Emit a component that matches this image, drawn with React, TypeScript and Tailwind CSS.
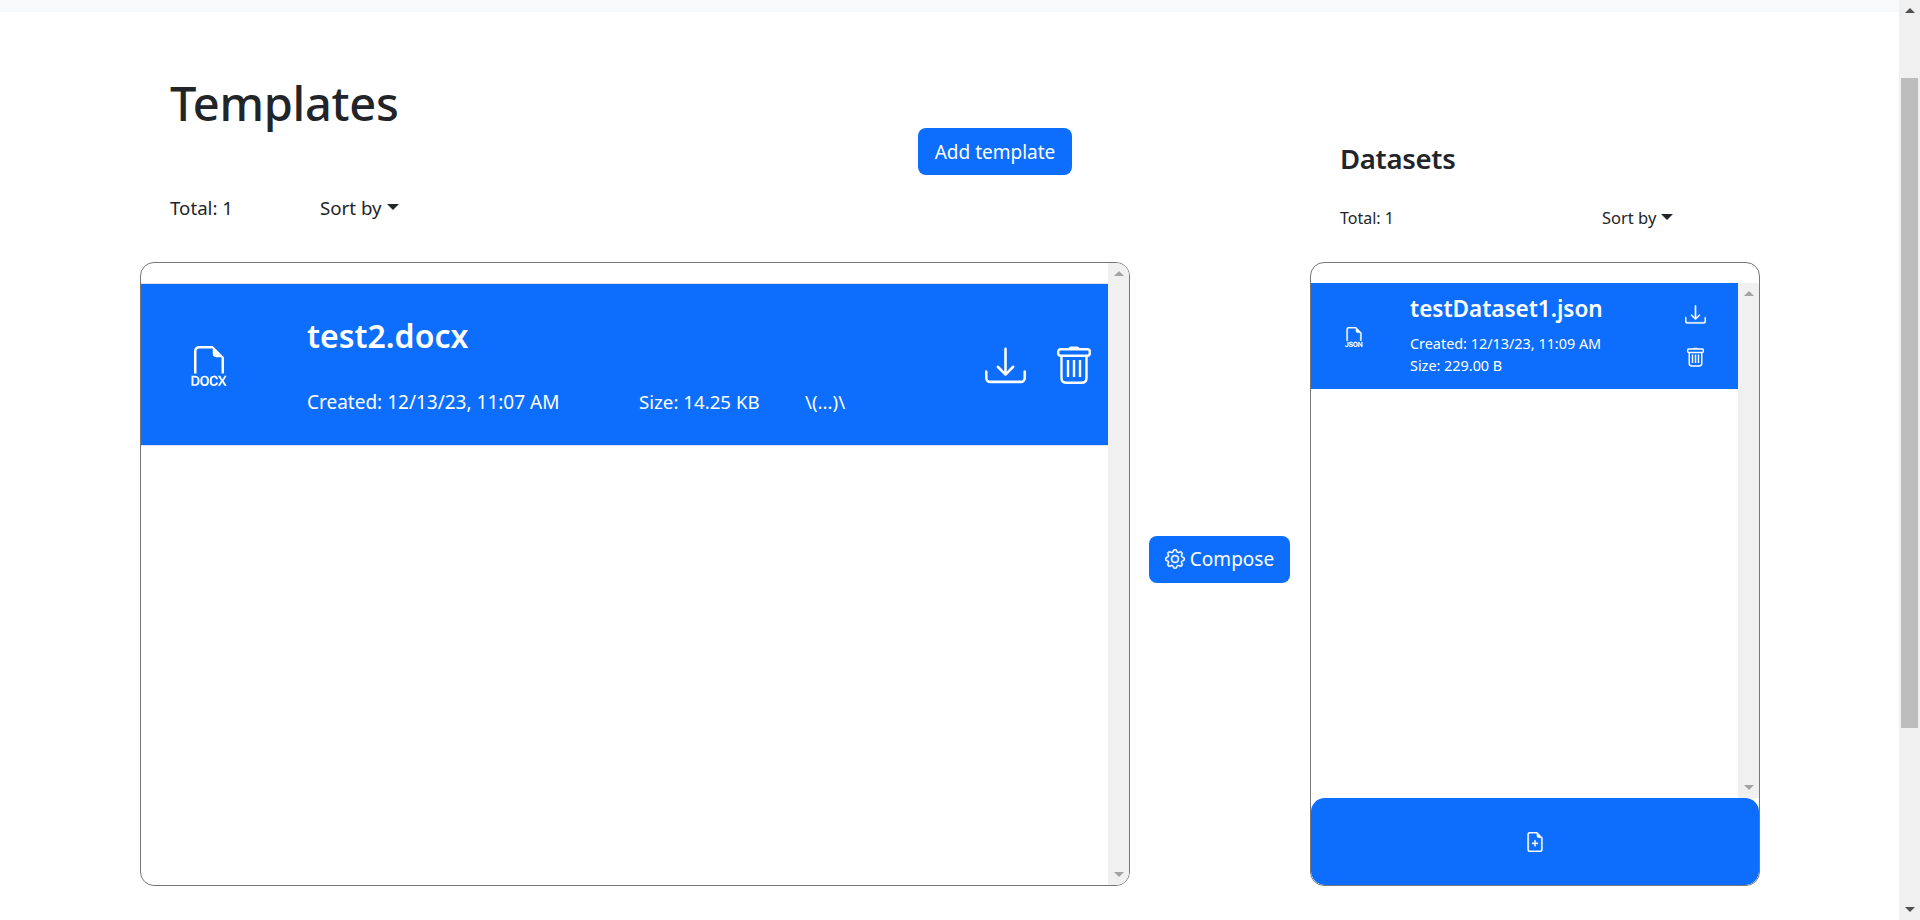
import React from "react";
import {
  BsDownload,
  BsFileEarmarkPlus,
  BsFiletypeDocx,
  BsFiletypeJson,
  BsGear,
} from "react-icons/bs";

const TrashIcon: React.FC<{ className?: string; thick?: boolean }> = ({ className, thick }) => {
  const sw = thick ? 3 : 2.4;
  return (
    <svg viewBox="0 0 34 38" fill="none" stroke="currentColor" className={className}>
      <path d="M12.5 3 Q12.5 1.5 14 1.5 H20 Q21.5 1.5 21.5 3" strokeWidth="2" />
      <rect x="1.2" y="3.2" width="31.6" height="6.6" rx="2.5" strokeWidth={sw} />
      <path d="M4.5 10 V32 Q4.5 36.8 9.5 36.8 H24.5 Q29.5 36.8 29.5 32 V10" strokeWidth={sw} />
      <path d="M11 14 V31 M17 14 V31 M23 14 V31" strokeWidth={sw} />
    </svg>
  );
};

const ScrollTrack: React.FC<{ light?: boolean; className?: string }> = ({ light, className }) => (
  <div className={`w-[21px] shrink-0 bg-[#f0f0f0] flex flex-col items-center justify-between ${className ?? ""}`}>
    <svg viewBox="0 0 10 5" className="w-[10px] h-[5px]">
      <path d="M5 0 L10 5 H0 Z" fill={light ? "#a3a3a3" : "#505050"} />
    </svg>
    <svg viewBox="0 0 10 5" className="w-[10px] h-[5px]">
      <path d="M0 0 H10 L5 5 Z" fill={light ? "#a3a3a3" : "#505050"} />
    </svg>
  </div>
);

const SortBy: React.FC<{ className?: string }> = ({ className }) => (
  <div className={`flex items-center text-[#212529] ${className ?? ""}`}>
    <span>Sort by</span>
    <span className="ml-[5px] mb-[3px] w-0 h-0 border-x-[6px] border-x-transparent border-t-[6px] border-t-[#212529]"></span>
  </div>
);

const App: React.FC = () => {
  return (
    <div className="flex h-[920px] overflow-hidden bg-white font-['Noto_Sans',sans-serif] text-[#212529]">
      <div className="flex-1 min-w-0">
        <div className="h-3 bg-[#f8f9fa]"></div>

        <div className="flex pl-[140px]">
          {/* templates */}
          <div className="w-[990px] shrink-0">
            <div className="flex h-[250px] pl-[30px]">
              <div className="w-[748px] shrink-0">
                <h1 className="mt-[57px] text-[47px] leading-[68px] font-medium tracking-[-0.3px]">Templates</h1>
                <div className="mt-[59px] flex text-[18.7px] leading-6">
                  <span className="w-[150px]">Total: 1</span>
                  <SortBy />
                </div>
              </div>
              <button className="mt-[116px] w-[154px] h-[47px] pt-[2px] rounded-lg bg-[#0d6efd] text-white text-[19px]">
                Add template
              </button>
            </div>

            <div className="flex h-[624px] border border-[#777777] rounded-[14px] overflow-hidden">
              <div className="flex-1 min-w-0 pt-[20px]">
                <div className="flex h-[163px] bg-[#0d6efd] text-white border-y border-[#dee2e6]">
                  <div className="w-[166px] shrink-0 flex items-center justify-center">
                    <BsFiletypeDocx className="w-[40px] h-[40px] mt-[3px] -ml-[30px]" />
                  </div>
                  <div className="flex-1 min-w-0 pt-[30px]">
                    <div className="text-[32px] leading-[44px] font-semibold">test2.docx</div>
                    <div className="mt-[32px] flex text-[18.7px] leading-6">
                      <span className="w-[332px] text-[19px]">Created: 12/13/23, 11:07 AM</span>
                      <span className="w-[166px]">Size: 14.25 KB</span>
                      <span>\(...)\</span>
                    </div>
                  </div>
                  <div className="w-[140px] shrink-0 flex items-start pt-[61px]">
                    <BsDownload className="w-[41px] h-[41px] ml-[17px]" />
                    <TrashIcon className="w-[34px] h-[38px] ml-[31px] mt-[1px]" />
                  </div>
                </div>
              </div>
              <ScrollTrack light className="py-[8px]" />
            </div>
          </div>

          {/* compose */}
          <div className="w-[180px] shrink-0 pt-[220px] flex items-center justify-center">
            <button className="w-[141px] h-[47px] ml-[-1px] rounded-lg bg-[#0d6efd] text-white text-[19px] flex items-center justify-center gap-[5px]">
              <BsGear className="w-[20px] h-[20px]" stroke="currentColor" strokeWidth={0.3} />
              Compose
            </button>
          </div>

          {/* datasets */}
          <div className="w-[450px] shrink-0">
            <div className="h-[250px] pl-[30px] pt-[128px]">
              <h2 className="text-[27.5px] leading-[38px] font-semibold tracking-[-0.3px]">Datasets</h2>
              <div className="mt-[28px] flex text-[16px] leading-6">
                <span className="w-[262px]">Total: 1</span>
                <SortBy className="text-[16.5px]" />
              </div>
            </div>

            <div className="flex flex-col h-[624px] border border-[#777777] rounded-[14px] overflow-hidden">
              <div className="h-[20px] shrink-0"></div>
              <div className="flex flex-1 min-h-0">
                <div className="flex-1 min-w-0">
                  <div className="flex h-[106px] bg-[#0d6efd] text-white">
                    <div className="w-[99px] shrink-0 flex items-center justify-center">
                      <BsFiletypeJson className="w-[20px] h-[20px] -ml-[13px] mt-[2px]" stroke="currentColor" strokeWidth={0.25} />
                    </div>
                    <div className="flex-1 min-w-0 pt-[9px]">
                      <div className="text-[22.5px] leading-[34px] font-semibold">testDataset1.json</div>
                      <div className="mt-[7px] text-[14.4px] leading-[22px]">Created: 12/13/23, 11:09 AM</div>
                      <div className="text-[14.4px] leading-[22px]">Size: 229.00 B</div>
                    </div>
                    <div className="w-[70px] shrink-0 flex flex-col items-start pl-[17px] pt-[21px]">
                      <BsDownload className="w-[21px] h-[21px]" stroke="currentColor" strokeWidth={0.25} />
                      <TrashIcon thick className="w-[17px] h-[20px] mt-[22px] ml-[2px]" />
                    </div>
                  </div>
                </div>
                <ScrollTrack light className="py-[8px]" />
              </div>
              <button className="h-[87px] shrink-0 rounded-[14px] bg-[#0d6efd] text-white flex items-center justify-center">
                <BsFileEarmarkPlus className="w-[20px] h-[20px]" stroke="currentColor" strokeWidth={0.3} />
              </button>
            </div>
          </div>
        </div>
      </div>

      {/* page scrollbar */}
      <div className="w-[21px] shrink-0 relative">
        <ScrollTrack className="h-full py-[8px]" />
        <div className="absolute left-[2px] right-[2px] top-[78px] h-[650px] bg-[#bdbdbd]"></div>
      </div>
    </div>
  );
};

export default App;
